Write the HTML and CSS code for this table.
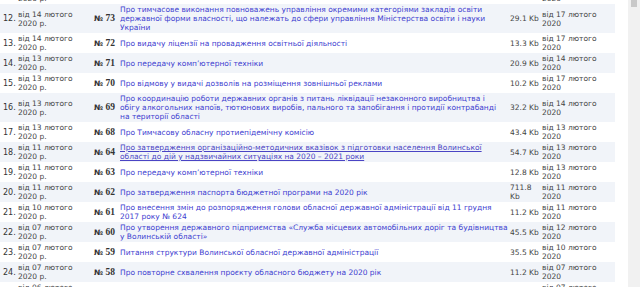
FILE: index.html
```html
<!DOCTYPE html>
<html lang="uk">
<head>
<meta charset="utf-8">
<title>Розпорядження</title>
<link rel="stylesheet" href="styles.css">
</head>
<body>
<div class="layout">
  <main class="content">
    <table class="docs">
      <colgroup>
        <col class="c-num"><col class="c-date"><col class="c-no"><col class="c-title"><col class="c-size"><col class="c-pub">
      </colgroup>
      <tbody>
        <tr><td class="num">11.</td><td class="date">від 14 лютого 2020 р.</td><td class="no"><span class="sign">№</span> 74</td><td class="title"><a href="#">Про надання дозволу на розроблення документації</a></td><td class="size">15.4 Kb</td><td class="pub">від 17 лютого 2020</td></tr>
        <tr><td class="num">12.</td><td class="date">від 14 лютого 2020 р.</td><td class="no"><span class="sign">№</span> 73</td><td class="title"><a href="#">Про тимчасове виконання повноважень управління окремими категоріями закладів освіти державної форми власності, що належать до сфери управління Міністерства освіти і науки України</a></td><td class="size">29.1 Kb</td><td class="pub">від 17 лютого 2020</td></tr>
        <tr><td class="num">13.</td><td class="date">від 14 лютого 2020 р.</td><td class="no"><span class="sign">№</span> 72</td><td class="title"><a href="#">Про видачу ліцензії на провадження освітньої діяльності</a></td><td class="size">13.3 Kb</td><td class="pub">від 17 лютого 2020</td></tr>
        <tr><td class="num">14.</td><td class="date">від 13 лютого 2020 р.</td><td class="no"><span class="sign">№</span> 71</td><td class="title"><a href="#">Про передачу комп’ютерної техніки</a></td><td class="size">20.9 Kb</td><td class="pub">від 14 лютого 2020</td></tr>
        <tr><td class="num">15.</td><td class="date">від 13 лютого 2020 р.</td><td class="no"><span class="sign">№</span> 70</td><td class="title"><a href="#">Про відмову у видачі дозволів на розміщення зовнішньої реклами</a></td><td class="size">10.2 Kb</td><td class="pub">від 17 лютого 2020</td></tr>
        <tr><td class="num">16.</td><td class="date">від 13 лютого 2020 р.</td><td class="no"><span class="sign">№</span> 69</td><td class="title"><a href="#">Про координацію роботи державних органів з питань ліквідації незаконного виробництва і<br>обігу алкогольних напоїв, тютюнових виробів, пального та запобігання і протидії контрабанді на&nbsp;території області</a></td><td class="size">32.2 Kb</td><td class="pub">від 14 лютого 2020</td></tr>
        <tr><td class="num">17.</td><td class="date">від 13 лютого 2020 р.</td><td class="no"><span class="sign">№</span> 68</td><td class="title"><a href="#">Про Тимчасову обласну протиепідемічну комісію</a></td><td class="size">43.4 Kb</td><td class="pub">від 13 лютого 2020</td></tr>
        <tr><td class="num">18.</td><td class="date">від 11 лютого 2020 р.</td><td class="no"><span class="sign">№</span> 64</td><td class="title"><a href="#" class="hover">Про затвердження організаційно-методичних вказівок з підготовки населення Волинської області до дій у надзвичайних ситуаціях на 2020 – 2021 роки</a></td><td class="size">54.7 Kb</td><td class="pub">від 13 лютого 2020</td></tr>
        <tr><td class="num">19.</td><td class="date">від 11 лютого 2020 р.</td><td class="no"><span class="sign">№</span> 63</td><td class="title"><a href="#">Про передачу комп’ютерної техніки</a></td><td class="size">12.8 Kb</td><td class="pub">від 13 лютого 2020</td></tr>
        <tr><td class="num">20.</td><td class="date">від 11 лютого 2020 р.</td><td class="no"><span class="sign">№</span> 62</td><td class="title"><a href="#">Про затвердження паспорта бюджетної програми на 2020 рік</a></td><td class="size">711.8 Kb</td><td class="pub">від 11 лютого 2020</td></tr>
        <tr><td class="num">21.</td><td class="date">від 10 лютого 2020 р.</td><td class="no"><span class="sign">№</span> 61</td><td class="title"><a href="#">Про внесення змін до розпорядження голови обласної державної адміністрації від 11 грудня 2017 року № 624</a></td><td class="size">11.2 Kb</td><td class="pub">від 11 лютого 2020</td></tr>
        <tr><td class="num">22.</td><td class="date">від 07 лютого 2020 р.</td><td class="no"><span class="sign">№</span> 60</td><td class="title"><a href="#">Про утворення державного підприємства «Служба місцевих автомобільних доріг та будівництва у Волинській області»</a></td><td class="size">45.5 Kb</td><td class="pub">від 12 лютого 2020</td></tr>
        <tr><td class="num">23.</td><td class="date">від 07 лютого 2020 р.</td><td class="no"><span class="sign">№</span> 59</td><td class="title"><a href="#">Питання структури Волинської обласної державної адміністрації</a></td><td class="size">35.5 Kb</td><td class="pub">від 10 лютого 2020</td></tr>
        <tr><td class="num">24.</td><td class="date">від 07 лютого 2020 р.</td><td class="no"><span class="sign">№</span> 58</td><td class="title"><a href="#">Про повторне схвалення проєкту обласного бюджету на 2020 рік</a></td><td class="size">11.2 Kb</td><td class="pub">від 07 лютого 2020</td></tr>
        <tr><td class="num">25.</td><td class="date">від 06 лютого 2020 р.</td><td class="no"><span class="sign">№</span> 57</td><td class="title"><a href="#">Про затвердження плану заходів</a></td><td class="size">18.6 Kb</td><td class="pub">від 07 лютого 2020</td></tr>
      </tbody>
    </table>
  </main>
  <div class="scrollbar"><div class="thumb"></div></div>
</div>
</body>
</html>
```

FILE: styles.css
```css
html, body {
  margin: 0;
  padding: 0;
  height: 287px;
  overflow: hidden;
  background: #ffffff;
}

body {
  font-family: "DejaVu Sans", Verdana, sans-serif;
  font-size: 7.5px;
  line-height: 9px;
  color: #444444;
}

.layout {
  display: flex;
  height: 287px;
  overflow: hidden;
}

.content {
  width: 628px;
  flex: none;
}

.docs {
  width: 615px;
  table-layout: fixed;
  border-collapse: collapse;
  margin-top: -16px;
}

.c-num { width: 17px; }
.c-date { width: 61px; }
.c-no { width: 40px; }
.c-title { width: 392px; }
.c-size { width: 31px; }
.c-pub { width: 74px; }

.docs td {
  padding: 1px 1px;
  vertical-align: middle;
}

.docs tr:nth-child(even) td {
  background: #f1f4f9;
}

.docs td.num {
  padding-left: 3px;
  font-size: 8px;
  color: #333333;
}

.docs td.no {
  text-align: right;
  padding-right: 3px;
  font-family: "Liberation Serif", "Times New Roman", serif;
  font-weight: bold;
  font-size: 9.5px;
  color: #333333;
  white-space: nowrap;
}

.sign {
  font-family: "DejaVu Sans", Verdana, sans-serif;
  font-size: 7.5px;
}

.docs td.title {
  padding-left: 2px;
  padding-right: 0;
}

.title a {
  color: #4040d0;
  text-decoration: none;
}

.title a.hover {
  text-decoration: underline;
  color: #4a44c4;
}

.docs td.size {
  padding-left: 0;
  padding-right: 0;
}

.scrollbar {
  width: 12px;
  flex: none;
  background: #f1f1f1;
}

.thumb {
  margin: 0 3px;
  height: 7px;
  background: #c9c9c9;
}
```
